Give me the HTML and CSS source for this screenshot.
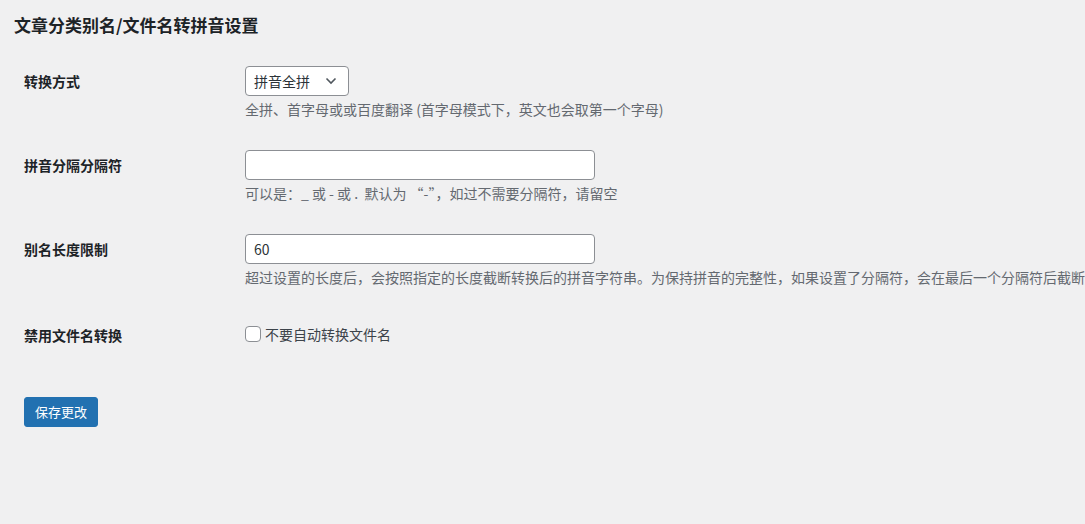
FILE: index.html
```
<!DOCTYPE html>
<html lang="zh-CN">
<head>
<meta charset="utf-8">
<title>文章分类别名/文件名转拼音设置</title>
<link rel="stylesheet" href="styles.css">
</head>
<body>
<div class="wrap">
  <h2 class="page-title">文章分类别名/文件名转拼音设置</h2>
  <form class="settings-form">
    <div class="form-table">
      <div class="form-row">
        <div class="row-label">转换方式</div>
        <div class="row-field">
          <div class="select">
            <span class="select-value">拼音全拼</span>
            <svg class="select-arrow" width="12" height="8" viewBox="0 0 12 8"><path d="M1.5 1.5 L6 6 L10.5 1.5" fill="none" stroke="#50575e" stroke-width="1.6"/></svg>
          </div>
          <p class="description">全拼、首字母或或百度翻译 (首字母模式下，英文也会取第一个字母)</p>
        </div>
      </div>
      <div class="form-row">
        <div class="row-label">拼音分隔分隔符</div>
        <div class="row-field">
          <div class="text-input"></div>
          <p class="description">可以是：_ 或 - 或 .&nbsp; 默认为 “-”，如过不需要分隔符，请留空</p>
        </div>
      </div>
      <div class="form-row">
        <div class="row-label">别名长度限制</div>
        <div class="row-field">
          <div class="text-input">60</div>
          <p class="description">超过设置的长度后，会按照指定的长度截断转换后的拼音字符串。为保持拼音的完整性，如果设置了分隔符，会在最后一个分隔符后截断</p>
        </div>
      </div>
      <div class="form-row check-row">
        <div class="row-label">禁用文件名转换</div>
        <div class="row-field">
          <label class="check-label"><span class="checkbox"></span>不要自动转换文件名</label>
        </div>
      </div>
    </div>
    <p class="submit"><span class="button-primary">保存更改</span></p>
  </form>
</div>
</body>
</html>
```
FILE: styles.css
```
html, body {
  margin: 0;
  padding: 0;
  background: #f0f0f1;
  overflow: hidden;
}
body {
  font-family: "Noto Sans CJK SC", "Liberation Sans", sans-serif;
  font-size: 14px;
  color: #1d2327;
  width: 1085px;
  height: 524px;
}
.wrap {
  padding: 13px 0 0 14px;
}
.page-title {
  margin: 0;
  font-size: 17px;
  line-height: 24px;
  font-weight: 700;
  color: #1d2327;
}
.settings-form {
  margin: 14px 0 0 10px;
}
.form-row {
  display: grid;
  grid-template-columns: 221px 1fr;
  min-width: 0;
}
.row-label {
  padding: 20px 10px 20px 0;
  font-weight: 700;
  font-size: 14px;
  line-height: 20px;
}
.row-field {
  padding: 15px 0;
  min-width: 0;
}
.check-row .row-label {
  padding-top: 22px;
}
.check-row .row-field {
  padding-top: 21px;
}
.select {
  box-sizing: border-box;
  width: 104px;
  height: 30px;
  background: #fff;
  border: 1px solid #8c8f94;
  border-radius: 4px;
  display: flex;
  align-items: center;
  justify-content: space-between;
  padding: 0 11px 0 8px;
  font-size: 14px;
  color: #2c3338;
}
.select-value {
  line-height: 20px;
}
.text-input {
  box-sizing: border-box;
  width: 350px;
  height: 30px;
  background: #fff;
  border: 1px solid #8c8f94;
  border-radius: 4px;
  padding: 0 8px;
  font-size: 14px;
  line-height: 28px;
  color: #2c3338;
}
.description {
  margin: 2px 0 0;
  font-size: 14px;
  line-height: 22px;
  color: #646970;
  white-space: nowrap;
}
.check-label {
  display: flex;
  align-items: center;
  font-size: 14px;
  line-height: 20px;
  color: #3c434a;
}
.checkbox {
  box-sizing: border-box;
  width: 16px;
  height: 16px;
  border: 1px solid #8c8f94;
  border-radius: 4px;
  background: #fff;
  margin-right: 4px;
}
.submit {
  margin: 22px 0 0;
  padding: 10px 0;
}
.button-primary {
  display: inline-block;
  box-sizing: border-box;
  height: 30px;
  padding: 0 10px;
  background: #2271b1;
  border: 1px solid #2271b1;
  border-radius: 3px;
  color: #fff;
  font-size: 13px;
  line-height: 28px;
}
```
